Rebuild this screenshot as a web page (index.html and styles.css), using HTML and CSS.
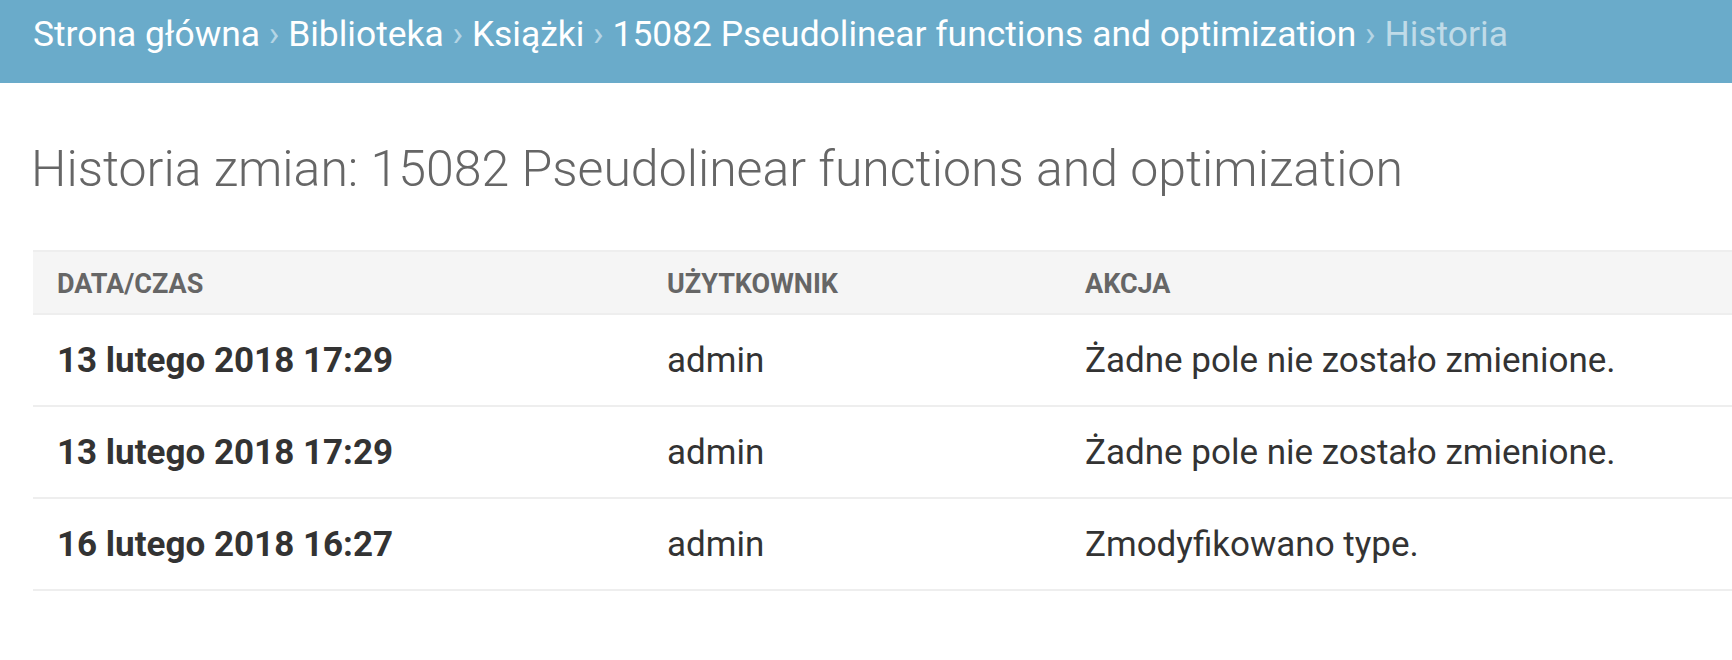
FILE: index.html
```html
<!DOCTYPE html>
<html lang="pl">
<head>
<meta charset="utf-8">
<title>Historia zmian</title>
<link rel="stylesheet" href="styles.css">
</head>
<body>
<div class="breadcrumbs">
  <a href="#">Strona główna</a> <span class="sep">›</span> <a href="#">Biblioteka</a> <span class="sep">›</span> <a href="#">Książki</a> <span class="sep">›</span> <a href="#">15082 Pseudolinear functions and optimization</a> <span class="sep">›</span> <span class="current">Historia</span>
</div>
<div class="content">
  <h1 class="title">Historia zmian: 15082 Pseudolinear functions and optimization</h1>
  <table class="history">
    <colgroup>
      <col class="col-date">
      <col class="col-user">
      <col class="col-action">
    </colgroup>
    <thead>
      <tr>
        <th>Data/czas</th>
        <th>Użytkownik</th>
        <th>Akcja</th>
      </tr>
    </thead>
    <tbody>
      <tr>
        <th class="date">13 lutego 2018 17:29</th>
        <td>admin</td>
        <td>Żadne pole nie zostało zmienione.</td>
      </tr>
      <tr>
        <th class="date">13 lutego 2018 17:29</th>
        <td>admin</td>
        <td>Żadne pole nie zostało zmienione.</td>
      </tr>
      <tr>
        <th class="date">16 lutego 2018 16:27</th>
        <td>admin</td>
        <td>Zmodyfikowano type.</td>
      </tr>
    </tbody>
  </table>
</div>
</body>
</html>
```

FILE: styles.css
```css
html, body {
  margin: 0;
  padding: 0;
  background: #fff;
}

body {
  font-family: Roboto, "Liberation Sans", sans-serif;
  color: #333;
}

.breadcrumbs {
  background: #6aabca;
  color: #c0dbe8;
  font-size: 35.4px;
  line-height: 41px;
  padding: 14px 33px 28px;
  white-space: nowrap;
}

.breadcrumbs a {
  color: #fff;
  text-decoration: none;
}

.breadcrumbs .sep {
  color: #b5d5e5;
}

.content {
  padding: 0 0 0 33px;
}

.title {
  margin: 57px 0 51px -2px;
  font-size: 50px;
  line-height: 59px;
  font-weight: 300;
  color: #666;
  white-space: nowrap;
}

.history {
  width: 100%;
  border-collapse: collapse;
  table-layout: fixed;
}

.col-date { width: 610px; }
.col-user { width: 418px; }

.history thead th {
  background: #f5f5f5;
  border-top: 2px solid #eee;
  border-bottom: 2px solid #eee;
  color: #666;
  font-size: 27px;
  line-height: 30px;
  font-weight: 700;
  text-transform: uppercase;
  text-align: left;
  padding: 17px 24px 14px;
}

.history tbody th,
.history tbody td {
  border-bottom: 2px solid #eee;
  font-size: 35px;
  line-height: 41px;
  text-align: left;
  padding: 25px 24px 24px;
  color: #333;
  white-space: nowrap;
}

.history tbody th {
  font-weight: 700;
}

.history tbody td {
  font-weight: 400;
}
```
